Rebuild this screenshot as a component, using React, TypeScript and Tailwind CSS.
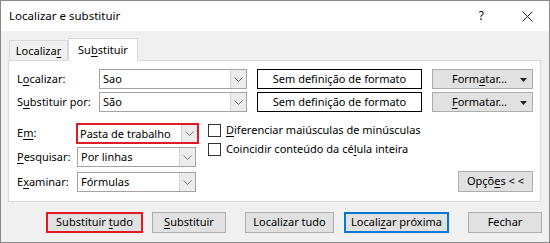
import type { ReactNode } from "react";

function U({ children }: { children: ReactNode }) {
  return <span className="underline decoration-1 underline-offset-[2px]">{children}</span>;
}

function Chevron() {
  return (
    <svg width="9" height="5" viewBox="0 0 9 5" aria-hidden="true">
      <path d="M0.5 0.5L4.5 4.5L8.5 0.5" fill="none" stroke="#7a7a7a" strokeWidth="1" />
    </svg>
  );
}

function Combo({ value, className = "" }: { value: string; className?: string }) {
  return (
    <div className={`flex h-[20px] border border-[#a3a3a3] bg-white ${className}`}>
      <div className="flex-1 truncate pl-[3px] leading-[18px]">{value}</div>
      <div className="flex w-[16px] items-center justify-center border-l border-[#d4d4d4] bg-[#ececec]">
        <Chevron />
      </div>
    </div>
  );
}

function Caret() {
  return (
    <svg width="7" height="4" viewBox="0 0 7 4" aria-hidden="true">
      <path d="M0 0H7L3.5 4Z" fill="#222" />
    </svg>
  );
}

function FormatButton({ children }: { children: ReactNode }) {
  return (
    <div className="relative flex h-[20px] w-[101px] items-center justify-center border border-[#adadad] bg-[#e1e1e1]">
      <span className="pr-[6px]">{children}</span>
      <span className="absolute right-[5px] top-[8px] flex">
        <Caret />
      </span>
    </div>
  );
}

function Button({ children, className = "" }: { children: ReactNode; className?: string }) {
  return (
    <div className={`flex items-center justify-center bg-[#e1e1e1] ${className}`}>
      <span className="whitespace-nowrap">{children}</span>
    </div>
  );
}

function Checkbox({ children }: { children: ReactNode }) {
  return (
    <div className="flex h-[13px] items-center">
      <div className="h-[13px] w-[13px] border border-[#333] bg-white" />
      <span className="ml-[5px] whitespace-nowrap">{children}</span>
    </div>
  );
}

export default function App() {
  return (
    <div className="flex h-[243px] w-[550px] flex-col border border-[#8a8a8a] bg-[#f0f0f0] font-['Noto_Sans','Open_Sans',sans-serif] text-[11px] text-black">
      {/* title bar */}
      <div className="flex h-[30px] shrink-0 items-center bg-white pl-[8px] text-[11.5px]">
        <span>Localizar e substituir</span>
        <span className="ml-auto mr-[38px] text-[12px]">?</span>
        <svg width="11" height="11" viewBox="0 0 11 11" className="mr-[16px]" aria-hidden="true">
          <path d="M0.5 0.5L10.5 10.5M10.5 0.5L0.5 10.5" stroke="#222" strokeWidth="1" />
        </svg>
      </div>

      <div className="px-[7px] pt-[7px]">
        {/* tabs */}
        <div className="flex h-[22px] items-end">
          <div className="ml-[1px] flex h-[20px] w-[59px] items-center justify-center border border-b-0 border-[#d9d9d9] bg-[#f0f0f0] pt-[1px]">
            <span>
              Localiza<U>r</U>
            </span>
          </div>
          <div className="relative z-10 -mb-px flex h-[23px] w-[70px] items-center justify-center border border-b-0 border-[#d9d9d9] bg-white">
            <span>
              Su<U>b</U>stituir
            </span>
          </div>
        </div>

        {/* panel */}
        <div className="h-[142px] w-[533px] border border-[#d9d9d9] bg-white pl-[8px] pt-[8px]">
          <div className="flex h-[20px] items-center">
            <div className="w-[82px]">
              L<U>o</U>calizar:
            </div>
            <Combo value="Sao" className="w-[148px]" />
            <div className="ml-[10px] flex h-[20px] w-[165px] items-center justify-center border border-black">
              Sem definição de formato
            </div>
            <div className="ml-[10px]">
              <FormatButton>
                Form<U>a</U>tar...
              </FormatButton>
            </div>
          </div>
          <div className="mt-[3px] flex h-[20px] items-center">
            <div className="w-[82px]">
              S<U>u</U>bstituir por:
            </div>
            <Combo value="São" className="w-[148px]" />
            <div className="ml-[10px] flex h-[20px] w-[165px] items-center justify-center border border-black">
              Sem definição de formato
            </div>
            <div className="ml-[10px]">
              <FormatButton>
                <U>F</U>ormatar...
              </FormatButton>
            </div>
          </div>

          <div className="mt-[11px] flex">
            <div className="w-[182px]">
              <div className="flex h-[21px] items-center">
                <div className="w-[59px]">
                  E<U>m</U>:
                </div>
                <div className="flex h-[21px] w-[123px] border-2 border-[#e01b24] bg-white">
                  <div className="flex-1 pl-[2px] leading-[17px]">Pasta de trabalho</div>
                  <div className="flex w-[16px] items-center justify-center border-l border-[#d4d4d4] bg-[#ececec]">
                    <Chevron />
                  </div>
                </div>
              </div>
              <div className="mt-[3px] flex h-[20px] items-center">
                <div className="w-[60px]">
                  <U>P</U>esquisar:
                </div>
                <Combo value="Por linhas" className="w-[119px]" />
              </div>
              <div className="mt-[5px] flex h-[20px] items-center">
                <div className="w-[60px]">
                  E<U>x</U>aminar:
                </div>
                <Combo value="Fórmulas" className="w-[119px]" />
              </div>
            </div>

            <div className="ml-[9px] flex flex-1 flex-col pt-[1px]">
              <Checkbox>
                <U>D</U>iferenciar maiúsculas de minúsculas
              </Checkbox>
              <div className="mt-[6px]">
                <Checkbox>
                  Coincidir conteúdo da cé<U>l</U>ula inteira
                </Checkbox>
              </div>
              <Button className="mt-auto mr-[7px] h-[21px] w-[75px] self-end border border-[#adadad]">
                Opçõ<U>e</U>s &lt; &lt;
              </Button>
            </div>
          </div>
        </div>
      </div>

      {/* bottom buttons */}
      <div className="mt-[10px] flex h-[21px]">
        <Button className="ml-[45px] w-[97px] border-2 border-[#e01b24]">
          Substituir <U>t</U>udo
        </Button>
        <Button className="ml-[9px] w-[74px] border border-[#adadad]">
          <U>S</U>ubstituir
        </Button>
        <Button className="ml-[19px] w-[89px] border border-[#adadad]">Localizar tudo</Button>
        <Button className="ml-[10px] w-[105px] border-2 border-[#0078d7]">
          Locali<U>z</U>ar próxima
        </Button>
        <Button className="ml-[19px] w-[74px] border border-[#adadad]">Fechar</Button>
      </div>
    </div>
  );
}
